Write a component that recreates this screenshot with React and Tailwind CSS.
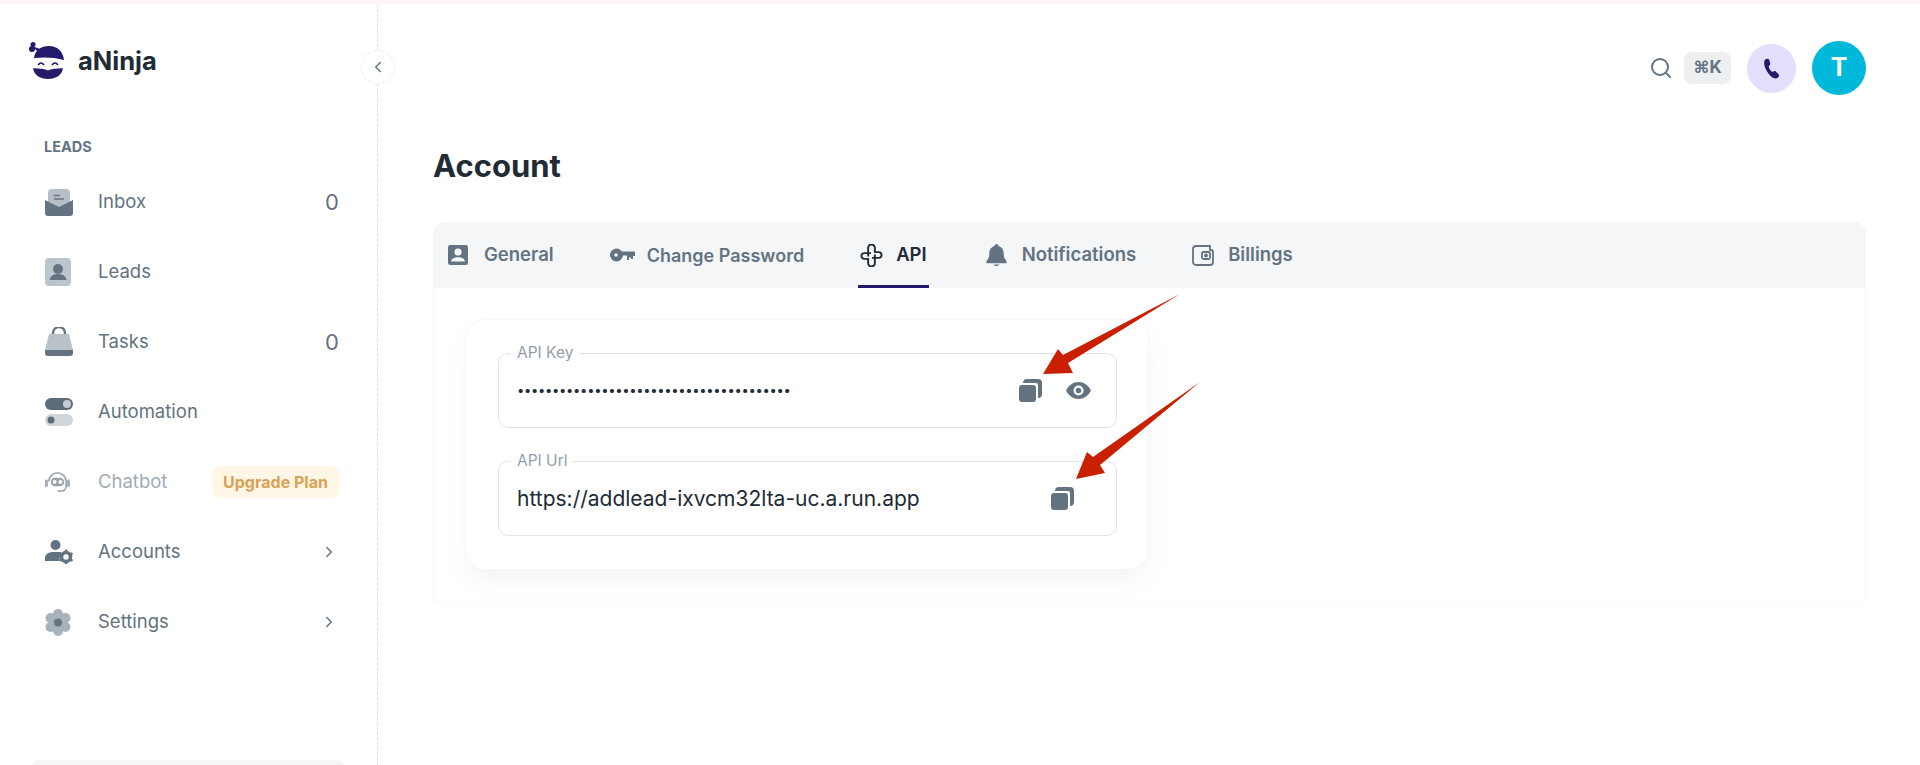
import { ChevronLeft, ChevronRight, Search } from "lucide-react";

const InboxIcon = () => (
  <svg viewBox="0 0 28 27" className="w-[28px] h-[27px]">
    <path d="M3 14 V4 a4 4 0 0 1 4-4 h14 a4 4 0 0 1 4 4 v10 l-11 6z" fill="#b6bfc8" />
    <path d="M9 6.500h6M9 10h10" stroke="#637381" strokeWidth="1.600" />
    <path d="M0 11 l14 7 14-7 v13 a3 3 0 0 1-3 3 H3 a3 3 0 0 1-3-3z" fill="#637381" />
  </svg>
);

const LeadsIcon = () => (
  <svg viewBox="0 0 26 28" className="w-[26px] h-[28px]">
    <rect width="26" height="28" rx="4" fill="#bcc4cc" />
    <circle cx="13" cy="11" r="5" fill="#637381" />
    <path d="M4.500 22 c1-5 5-6 8.500-6 s7.500 1 8.500 6z" fill="#637381" />
  </svg>
);

const TasksIcon = () => (
  <svg viewBox="0 0 28 30" className="w-[28px] h-[30px]">
    <path d="M8 8 V6 a6 6 0 0 1 12 0 v2" fill="none" stroke="#637381" strokeWidth="2.400" />
    <path d="M4 7 h20 l4 16 H0z" fill="#b9c1c9" />
    <path d="M0 23 h28 v3 a3 3 0 0 1-3 3 H3 a3 3 0 0 1-3-3z" fill="#637381" />
  </svg>
);

const AutomationIcon = () => (
  <svg viewBox="0 0 28 28" className="w-[28px] h-[28px]">
    <rect width="28" height="12" rx="6" fill="#5d6b79" />
    <circle cx="22" cy="6" r="4" fill="#c4cdd5" />
    <rect y="16" width="28" height="12" rx="6" fill="#d0d5da" />
    <circle cx="6" cy="22" r="3.500" fill="#5d6b79" />
  </svg>
);

const ChatbotIcon = () => (
  <svg viewBox="0 0 26 26" className="w-[25px] h-[25px]" fill="none">
    <path d="M4 12 a9 9 0 0 1 18 0 v5 a5 5 0 0 1-5 5 h-4" stroke="#a4adb6" strokeWidth="2" />
    <rect x="6" y="8" width="14" height="9" rx="4.500" fill="#98a2ac" />
    <circle cx="10" cy="12.500" r="2" fill="#fff" />
    <circle cx="16" cy="12.500" r="2" fill="#fff" />
    <rect x="0" y="10" width="3" height="8" rx="1.500" fill="#a4adb6" />
    <rect x="23" y="10" width="3" height="8" rx="1.500" fill="#a4adb6" />
  </svg>
);

const AccountsIcon = () => (
  <svg viewBox="0 0 28 24" className="w-[28px] h-[24px]">
    <circle cx="10.500" cy="5" r="5" fill="#637381" />
    <path d="M0 21 v-3 c0-4 4-6 8-6 h8 l-2 9z" fill="#637381" />
    <circle cx="21" cy="17" r="4.500" fill="none" stroke="#637381" strokeWidth="3.500" />
    <path d="M21 9.500v3M21 21.500v3M14.500 13.200l2.600 1.500M24.900 19.300l2.600 1.500M14.500 20.800l2.600-1.500M24.900 14.700l2.600-1.500" stroke="#637381" strokeWidth="2.400" />
  </svg>
);

const SettingsIcon = () => (
  <svg viewBox="0 0 26 27" className="w-[26px] h-[27px]" fill="#a9b2bb">
    <circle cx="13" cy="13.500" r="9" />
    <circle cx="13" cy="5" r="5" />
    <circle cx="13" cy="22" r="5" />
    <circle cx="5.500" cy="9" r="5" />
    <circle cx="20.500" cy="9" r="5" />
    <circle cx="5.500" cy="18" r="5" />
    <circle cx="20.500" cy="18" r="5" />
    <circle cx="13" cy="13.500" r="4" fill="#637381" />
  </svg>
);

const ContactIcon = () => (
  <svg viewBox="0 0 20 20" className="w-[20px] h-[20px]">
    <rect width="20" height="20" rx="2.500" fill="#637381" />
    <circle cx="10" cy="7" r="3.600" fill="#f4f6f8" />
    <path d="M3 16.500 c.500-3 3.500-4.300 7-4.300 s6.500 1.300 7 4.300z" fill="#f4f6f8" />
  </svg>
);

const KeyIcon = () => (
  <svg viewBox="0 0 25 14" className="w-[25px] h-[14px]">
    <circle cx="6.500" cy="7" r="6.500" fill="#637381" />
    <circle cx="6" cy="7" r="1.800" fill="#f4f6f8" />
    <path d="M11 3.500 h14 v4.500 h-2 v3 h-2 v-1.500 h-2 v2.500 h-2 v-4.500 h-6z" fill="#637381" />
  </svg>
);

const ApiIcon = () => (
  <svg viewBox="0 0 24 24" className="w-[23px] h-[23px]" fill="none" stroke="#212b36" strokeWidth="2" strokeLinejoin="round">
    <path d="M8.500 13 V4 a3.500 3.500 0 0 1 7 0 v4.500 h4 a3 3 0 0 1 0 6 h-7" />
    <path d="M15.500 11 v9 a3.500 3.500 0 0 1-7 0 v-4.500 h-4 a3 3 0 0 1 0-6 h7" />
  </svg>
);

const BellIcon = () => (
  <svg viewBox="0 0 21 24" className="w-[21px] h-[23px]" fill="#637381">
    <path d="M10.500 0 c1.200 0 2 .800 2 2 4 1 5.500 4.500 5.500 8 0 4 1 5 3 8 v2 H0 v-2 c2-3 3-4 3-8 0-3.500 1.500-7 5.500-8 0-1.200.800-2 2-2z" />
    <path d="M7.500 21.500 h6 c-.500 2-5.500 2-6 0z" />
  </svg>
);

const WalletIcon = () => (
  <svg viewBox="0 0 22 21" className="w-[22px] h-[21px]" fill="none" stroke="#637381" strokeWidth="1.800">
    <path d="M4 1 h14 v4 h1 a2 2 0 0 1 2 2 v10 a3 3 0 0 1-3 3 H4 a3 3 0 0 1-3-3 V4 a3 3 0 0 1 3-3z" />
    <rect x="10" y="7" width="8" height="7" rx="1.500" />
    <circle cx="14" cy="10.500" r="1" fill="#637381" />
  </svg>
);

const CopyIcon = () => (
  <svg viewBox="0 0 23 23" className="w-[23px] h-[23px]">
    <rect y="6" width="17" height="17" rx="3" fill="#637381" />
    <path d="M8 0 h11 a4 4 0 0 1 4 4 v11 a4 4 0 0 1-4 4 v-13 a2 2 0 0 0-2-2 h-13 a4 4 0 0 1 4-4z" fill="#637381" />
  </svg>
);

const EyeIcon = () => (
  <svg viewBox="0 0 25 17" className="w-[25px] h-[17px]">
    <path d="M0 8.500 C3 3 7 0 12.500 0 S22 3 25 8.500 C22 14 18 17 12.500 17 S3 14 0 8.500z" fill="#637381" />
    <circle cx="12.500" cy="8.500" r="5" fill="#fff" />
    <circle cx="12.500" cy="8.500" r="2.800" fill="#637381" />
  </svg>
);

const Logo = () => (
  <svg viewBox="0 0 38 38" className="w-[38px] h-[38px]">
    <path d="M5 16 C6 8 12 4 20 4 c8 0 14 5 15 14 -10-3-20-3-30-2z" fill="#241a6b" />
    <circle cx="4" cy="2.500" r="2.500" fill="#241a6b" />
    <circle cx="3" cy="7" r="3" fill="#241a6b" />
    <path d="M3 4 l8 3 v5z" fill="#241a6b" />
    <path d="M4 26 c4 1 10 0 15 2.500 c5-2.500 11-1.500 15-2.500 c-1 7-7 11-15 11 S5 33 4 26z" fill="#241a6b" />
    <path d="M9 23 q3-4 6 0 M23 23 q3-4 6 0" fill="none" stroke="#241a6b" strokeWidth="1.600" />
  </svg>
);

const navItems = [
  { label: "Inbox", icon: <InboxIcon />, count: "0" },
  { label: "Leads", icon: <LeadsIcon /> },
  { label: "Tasks", icon: <TasksIcon />, count: "0" },
  { label: "Automation", icon: <AutomationIcon /> },
  { label: "Chatbot", icon: <ChatbotIcon />, disabled: true },
  { label: "Accounts", icon: <AccountsIcon />, arrow: true },
  { label: "Settings", icon: <SettingsIcon />, arrow: true },
];

const tabs = [
  { label: "General", icon: <ContactIcon />, gap: "gap-4", margin: "mr-14", size: "text-[18.500px]" },
  { label: "Change Password", icon: <KeyIcon />, gap: "gap-3", margin: "mr-[54px]", size: "text-[18px]" },
  { label: "API", icon: <ApiIcon />, gap: "gap-[13px]", margin: "mr-[57px] px-[2px]", size: "text-[18.500px]", active: true },
  { label: "Notifications", icon: <BellIcon />, gap: "gap-[15px]", margin: "mr-14", size: "text-[18.500px]" },
  { label: "Billings", icon: <WalletIcon />, gap: "gap-[14px]", margin: "", size: "text-[18.500px]" },
];

function NavRow({ item }) {
  return (
    <div className="h-[70px] flex items-center pl-[45px] pr-[38px]">
      <div className="w-[53px] flex-none">{item.icon}</div>
      <span className={`text-[18.500px] ${item.disabled ? "text-[#a2abb4]" : "text-[#637381]"}`}>
        {item.label}
      </span>
      <div className="ml-auto flex items-center">
        {item.count && <span className="text-[22px] text-[#637381]">{item.count}</span>}
        {item.arrow && <ChevronRight size={18} color="#637381" className="mr-px" />}
        {item.disabled && (
          <span className="h-[32px] w-[127px] flex items-center justify-center rounded-lg bg-[#fff7e6] text-[#d9a256] text-[16px] font-bold">
            Upgrade Plan
          </span>
        )}
      </div>
    </div>
  );
}

function Field({ label, value, small, children }) {
  return (
    <fieldset className="h-[82px] border border-[#dfe3e8] rounded-[10px] pl-[12px] pr-[25px]">
      <legend className="px-[6px] text-[15.500px] leading-[14px] text-[#919eab]">{label}</legend>
      <div className="h-[66px] flex items-center justify-between pb-[5px]">
        <span
          className={
            small
              ? "pl-[6px] text-[13px] tracking-[-0.300px] text-[#212b36]"
              : "pl-[6px] text-[21px] text-[#212b36]"
          }
        >
          {value}
        </span>
        {children}
      </div>
    </fieldset>
  );
}

export default function App() {
  return (
    <div className="relative h-[765px] overflow-hidden flex bg-white border-t-4 border-[#fdf2f5] [font-family:Inter,sans-serif]">
      <aside className="relative w-[378px] flex-none border-r border-dashed border-[#dfe3e8]">
        <div className="flex items-center gap-[11px] pl-[29px] pt-[38px]">
          <Logo />
          <span className="text-[25.500px] font-bold text-[#212b36]">aNinja</span>
        </div>
        <p className="pl-[44px] mt-[58px] text-[14.500px] font-bold leading-[18px] text-[#637381]">LEADS</p>
        <div className="mt-[11px]">
          {navItems.map((item) => (
            <NavRow key={item.label} item={item} />
          ))}
        </div>
        <div className="absolute left-[32px] top-[756px] w-[312px] h-[20px] rounded-lg bg-[#f4f6f8]" />
        <button className="absolute left-[361px] top-[46px] w-[34px] h-[34px] rounded-full bg-white border border-dashed border-[#e7eaee] flex items-center justify-center">
          <ChevronLeft size={18} color="#637381" />
        </button>
      </aside>

      <main className="flex-1 pl-[55px] pr-[54px]">
        <header className="h-[91px] pt-[37px] flex items-start justify-end">
          <Search size={24} color="#637381" strokeWidth={2} className="mt-[15px] mr-[11px]" />
          <span className="mt-[11px] h-[32px] w-[47px] rounded-lg bg-[#edeff1] flex items-center justify-center text-[17px] font-bold text-[#637381]">
            ⌘K
          </span>
          <span className="ml-[16px] mt-[3px] w-[49px] h-[49px] rounded-full bg-[#e4defd] flex items-center justify-center">
            <svg viewBox="0 0 20 24" className="w-[18px] h-[22px]">
              <path d="M2 2 c2-2 4-2 5 0 l1 4 c.500 2-2 2-1.500 4 .500 2 2 4 3.500 5 1.500.500 2.500-1.500 4-.500 l3 3 c1.500 1.500 1 3-1 4.500 -3 1.500-7-.500-10-5 C2.500 12 0 6 2 2z" fill="#241a6b" />
            </svg>
          </span>
          <span className="ml-[16px] w-[54px] h-[54px] rounded-full bg-[#00b8d9] flex items-center justify-center text-[25px] font-bold text-white">
            T
          </span>
        </header>

        <h1 className="mt-[51px] text-[31px] leading-[40px] font-bold text-[#212b36]">Account</h1>

        <section className="mt-[36px] h-[380px] rounded-t-xl border border-[#f7f8f9]">
          <nav className="h-[66px] -m-px bg-[#f4f6f8] rounded-t-xl flex pl-[15px]">
            {tabs.map((tab) => (
              <div
                key={tab.label}
                className={`h-full flex items-center ${tab.gap} ${tab.margin} border-b-[3px] pt-[3px] ${tab.active ? "border-[#241a6b]" : "border-transparent"}`}
              >
                {tab.icon}
                <span className={`${tab.size} font-semibold ${tab.active ? "text-[#212b36]" : "text-[#637381]"}`}>
                  {tab.label}
                </span>
              </div>
            ))}
          </nav>
          <div className="ml-[31px] mt-[32px] w-[684px] h-[251px] rounded-[20px] bg-white border border-[#f4f6f8] shadow-[0_12px_24px_-4px_rgba(145,158,171,0.12)] pl-[32px] pr-[31px] pt-[26px] flex flex-col gap-[26px]">
            <Field label="API Key" value={"•".repeat(39)} small>
              <div className="flex items-center gap-[24px]">
                <CopyIcon />
                <EyeIcon />
              </div>
            </Field>
            <Field label="API Url" value="https://addlead-ixvcm32lta-uc.a.run.app">
              <div className="mr-[17px]">
                <CopyIcon />
              </div>
            </Field>
          </div>
        </section>
      </main>

      {/* annotation arrows, page coordinates */}
      <svg className="absolute left-0 -top-[4px] pointer-events-none" width="1920" height="765">
        <polygon points="1180,294 1063,355 1058,349 1043,374 1073,373 1068,363" fill="#c92000" />
        <polygon points="1200,382 1093,457 1087,452 1076,479 1105,473 1100,465" fill="#c92000" />
      </svg>
    </div>
  );
}
